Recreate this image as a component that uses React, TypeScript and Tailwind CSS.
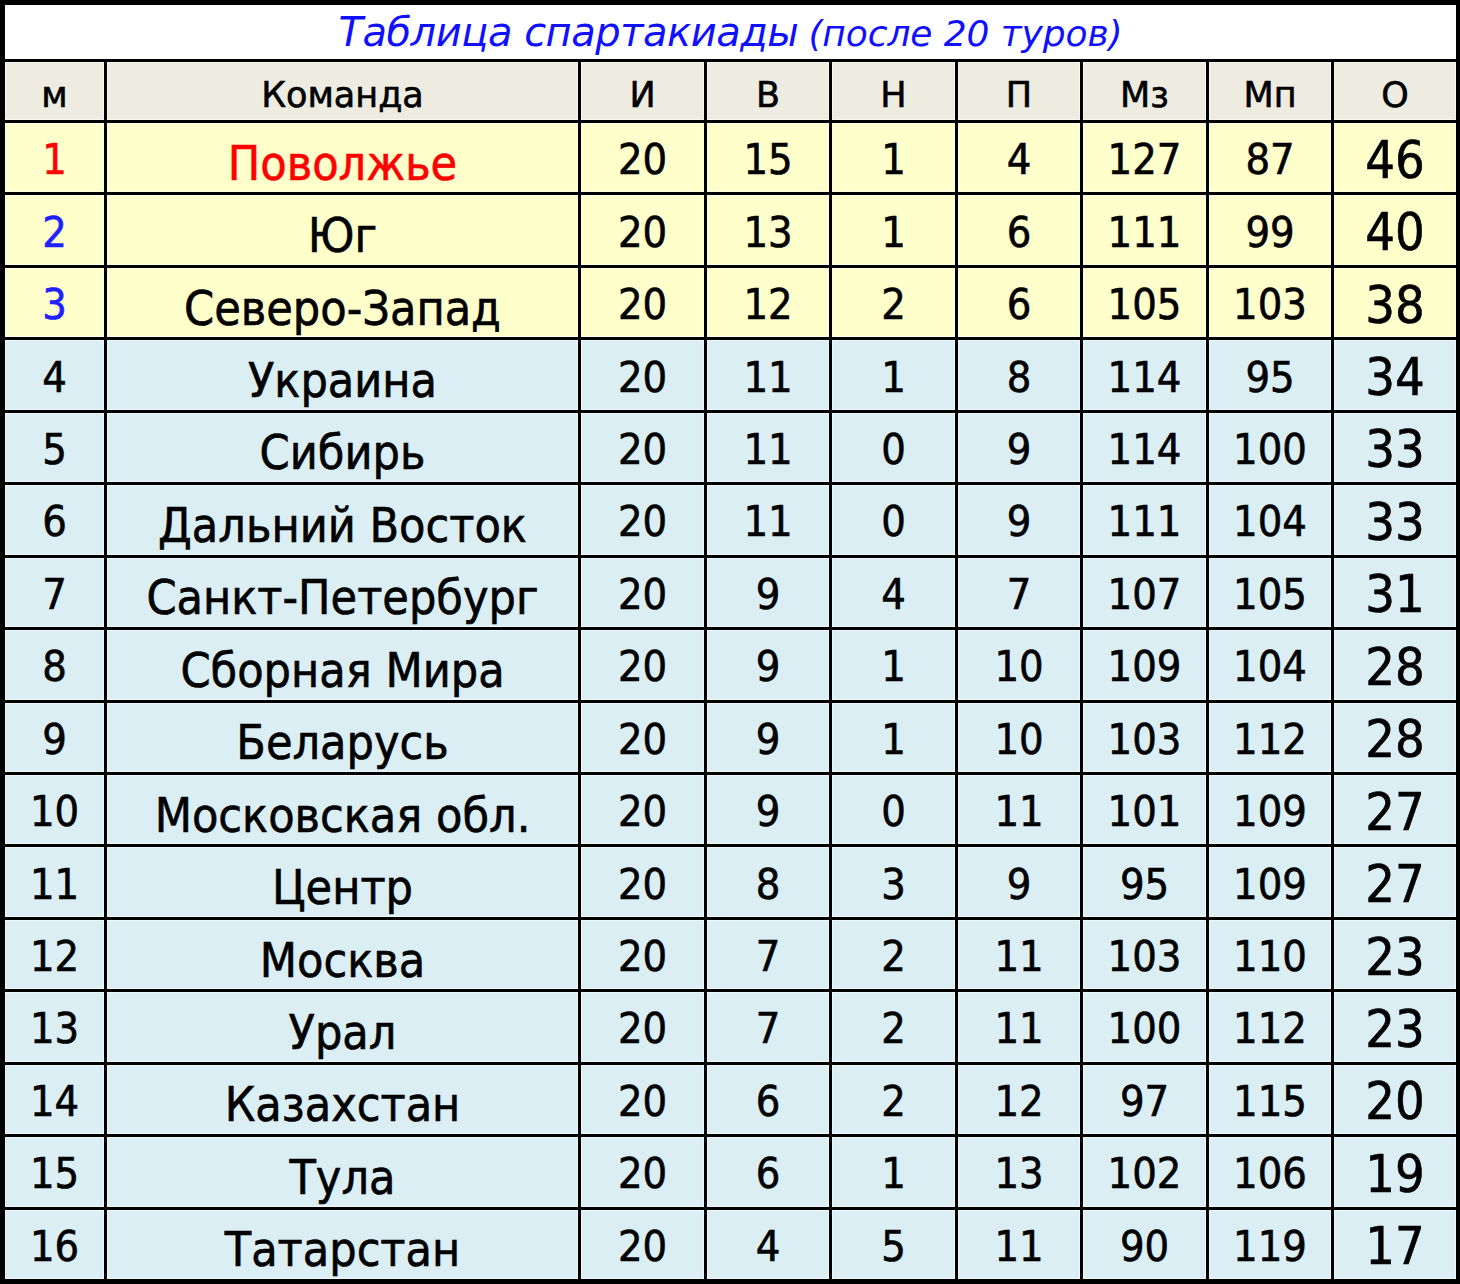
import React from "react";

type Row = { m: number; name: string; i: number; v: number; n: number; p: number; mz: number; mp: number; o: number };

const rows: Row[] = [
  { m: 1, name: "Поволжье", i: 20, v: 15, n: 1, p: 4, mz: 127, mp: 87, o: 46 },
  { m: 2, name: "Юг", i: 20, v: 13, n: 1, p: 6, mz: 111, mp: 99, o: 40 },
  { m: 3, name: "Северо-Запад", i: 20, v: 12, n: 2, p: 6, mz: 105, mp: 103, o: 38 },
  { m: 4, name: "Украина", i: 20, v: 11, n: 1, p: 8, mz: 114, mp: 95, o: 34 },
  { m: 5, name: "Сибирь", i: 20, v: 11, n: 0, p: 9, mz: 114, mp: 100, o: 33 },
  { m: 6, name: "Дальний Восток", i: 20, v: 11, n: 0, p: 9, mz: 111, mp: 104, o: 33 },
  { m: 7, name: "Санкт-Петербург", i: 20, v: 9, n: 4, p: 7, mz: 107, mp: 105, o: 31 },
  { m: 8, name: "Сборная Мира", i: 20, v: 9, n: 1, p: 10, mz: 109, mp: 104, o: 28 },
  { m: 9, name: "Беларусь", i: 20, v: 9, n: 1, p: 10, mz: 103, mp: 112, o: 28 },
  { m: 10, name: "Московская обл.", i: 20, v: 9, n: 0, p: 11, mz: 101, mp: 109, o: 27 },
  { m: 11, name: "Центр", i: 20, v: 8, n: 3, p: 9, mz: 95, mp: 109, o: 27 },
  { m: 12, name: "Москва", i: 20, v: 7, n: 2, p: 11, mz: 103, mp: 110, o: 23 },
  { m: 13, name: "Урал", i: 20, v: 7, n: 2, p: 11, mz: 100, mp: 112, o: 23 },
  { m: 14, name: "Казахстан", i: 20, v: 6, n: 2, p: 12, mz: 97, mp: 115, o: 20 },
  { m: 15, name: "Тула", i: 20, v: 6, n: 1, p: 13, mz: 102, mp: 106, o: 19 },
  { m: 16, name: "Татарстан", i: 20, v: 4, n: 5, p: 11, mz: 90, mp: 119, o: 17 },
];

const headers = ["м", "Команда", "И", "В", "Н", "П", "Мз", "Мп", "О"];

const cellBase =
  "flex items-center justify-center shadow-[inset_0_0_0_1px_rgba(255,255,255,0.55)] text-black leading-none [-webkit-text-stroke:0.6px_currentColor]";

export default function App() {
  return (
    <div
      className="w-[1460px] h-[1284px] bg-black pt-[5px] pl-[5px] pr-[4px] pb-[5px] grid gap-[3px] grid-cols-[99px_471px_123px_122px_123px_122px_123px_122px_122px] grid-rows-[54px_58px_repeat(16,minmax(0,1fr))]"
      style={{ fontFamily: '"DejaVu Sans Condensed", "DejaVu Sans", sans-serif' }}
    >
      <div
        className="col-span-9 bg-white flex items-end justify-center pb-[7px] text-[#1010ff] italic leading-none"
        style={{ fontFamily: '"DejaVu Sans", sans-serif' }}
      >
        <span className="text-[40px] tracking-[-0.5px]">Таблица спартакиады</span>
        <span className="text-[36px] ml-[10px] tracking-[-0.1px]">(после 20 туров)</span>
      </div>

      {headers.map((h) => (
        <div
          key={h}
          className={`${cellBase} bg-[#eeece1] text-[35px] pt-[8px] [-webkit-text-stroke:0.3px_currentColor]`}
          style={{ fontFamily: '"DejaVu Sans", sans-serif' }}
        >
          {h}
        </div>
      ))}

      {rows.map((r) => {
        const bg = r.m <= 3 ? "bg-[#ffffcc]" : "bg-[#daeef3]";
        const mColor = r.m === 1 ? "text-[#ff0000]" : r.m <= 3 ? "text-[#2020ff]" : "text-black";
        const nameColor = r.m === 1 ? "text-[#ff0000]" : "text-black";
        return (
          <React.Fragment key={r.m}>
            <div className={`${cellBase} ${bg} text-[43px] pt-[4px]`}>
              <span className={mColor}>{r.m}</span>
            </div>
            <div className={`${cellBase} ${bg} text-[48px] pt-[10px]`}>
              <span className={nameColor}>{r.name}</span>
            </div>
            {[r.i, r.v, r.n, r.p, r.mz, r.mp].map((val, idx) => (
              <div key={idx} className={`${cellBase} ${bg} text-[43px] pt-[4px]`}>
                {val}
              </div>
            ))}
            <div className={`${cellBase} ${bg} text-[52px] pt-[4px]`}>{r.o}</div>
          </React.Fragment>
        );
      })}
    </div>
  );
}
